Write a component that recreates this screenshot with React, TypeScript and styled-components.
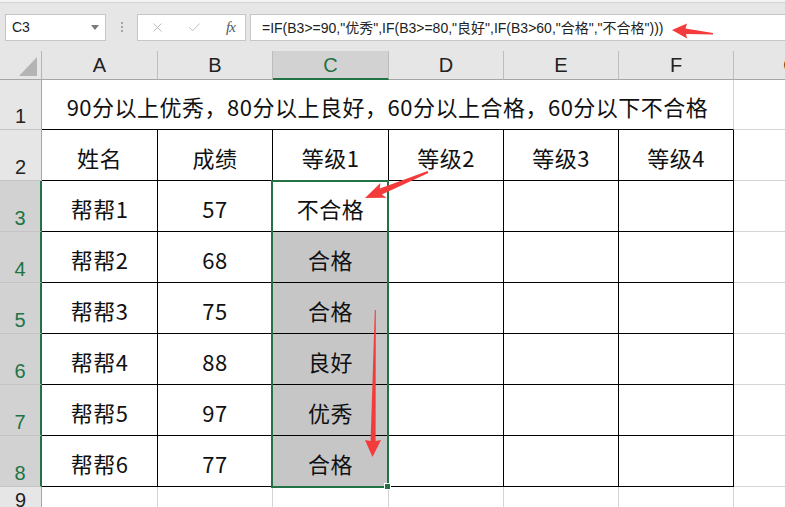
import React from 'react'
import styled, { createGlobalStyle } from 'styled-components'
import { X, Check } from 'lucide-react'

const GRID = '#d4d4d4'
const INK = '#000'
const GREEN = '#217346'

const GlobalStyle = createGlobalStyle`
  html, body {
    margin: 0;
    padding: 0;
    background: #fff;
  }
  body {
    font-family: "Noto Sans CJK SC", "Noto Sans", sans-serif;
    overflow: hidden;
  }
`

const Page = styled.div`
  position: relative;
  width: 785px;
  height: 507px;
  overflow: hidden;
  background: #fff;
`

const TopStrip = styled.div`
  height: 2px;
  background: #f3f3f3;
  border-bottom: 1px solid #d4d4d4;
`

const FormulaBar = styled.div`
  display: flex;
  align-items: center;
  height: 48px;
  padding-left: 5px;
  background: #e6e6e6;
`

const NameBox = styled.div`
  box-sizing: border-box;
  display: flex;
  align-items: center;
  justify-content: space-between;
  width: 101px;
  height: 27px;
  padding: 0 6px 0 6px;
  background: #fff;
  border: 1px solid #c6c6c6;
  font-family: "Liberation Sans", "Noto Sans", sans-serif;
  font-size: 14px;
  color: #222;
`

const Caret = styled.span`
  width: 0;
  height: 0;
  border-left: 4px solid transparent;
  border-right: 4px solid transparent;
  border-top: 5px solid #7a7a7a;
`

const Grip = styled.div`
  display: flex;
  flex-direction: column;
  gap: 2px;
  margin: 0 14px 0 15px;
  & > span {
    width: 2px;
    height: 2px;
    background: #a6a6a6;
  }
`

const ButtonBox = styled.div`
  box-sizing: border-box;
  display: flex;
  align-items: center;
  width: 109px;
  height: 27px;
  padding-left: 12px;
  gap: 22px;
  background: #fff;
  border: 1px solid #c6c6c6;
`

const Fx = styled.span`
  font-family: "Liberation Serif", "DejaVu Serif", serif;
  font-style: italic;
  font-size: 15px;
  color: #555;
  letter-spacing: -1px;
  margin-left: 2px;
`

const FormulaInput = styled.div`
  box-sizing: border-box;
  flex: 1;
  display: flex;
  align-items: center;
  height: 27px;
  margin-left: 4px;
  padding-left: 11px;
  background: #fff;
  border: 1px solid #c6c6c6;
  border-right: none;
  font-family: "Liberation Sans", "Noto Sans CJK SC", sans-serif;
  font-size: 14px;
  color: #222;
  white-space: nowrap;
`

const Sheet = styled.div`
  display: grid;
  grid-template-columns: 42px 116px 115px 116px 115px 115px 115px 115px;
  grid-template-rows: 29px 50px repeat(7, 51px) 27px;
`

const Corner = styled.div`
  box-sizing: border-box;
  background: #e6e6e6;
  border-right: 1px solid #b5b5b5;
  border-bottom: 1px solid #a6a6a6;
`

const ColHead = styled.div<{ $selected?: boolean }>`
  box-sizing: border-box;
  display: flex;
  align-items: center;
  justify-content: center;
  background: ${({ $selected }) => ($selected ? '#d2d2d2' : '#e6e6e6')};
  border-right: 1px solid #bdbdbd;
  border-bottom: ${({ $selected }) => ($selected ? `2px solid ${GREEN}` : '1px solid #a6a6a6')};
  font-family: "Liberation Sans", "Noto Sans", sans-serif;
  font-size: 20px;
  color: ${({ $selected }) => ($selected ? GREEN : '#222')};
  padding-top: ${({ $selected }) => ($selected ? '1px' : '0')};
`

const RowHead = styled.div<{ $selected?: boolean }>`
  box-sizing: border-box;
  display: flex;
  align-items: flex-end;
  justify-content: center;
  padding-bottom: 2px;
  background: ${({ $selected }) => ($selected ? '#d2d2d2' : '#e6e6e6')};
  border-right: ${({ $selected }) => ($selected ? `2px solid ${GREEN}` : '1px solid #a6a6a6')};
  border-bottom: 1px solid #c4c4c4;
  font-family: "Liberation Sans", "Noto Sans", sans-serif;
  font-size: 20px;
  line-height: 22px;
  color: ${({ $selected }) => ($selected ? GREEN : '#222')};
`

const Cell = styled.div<{ $right: string; $bottom: string; $fill?: string; $span?: number }>`
  box-sizing: border-box;
  position: relative;
  display: flex;
  align-items: center;
  justify-content: center;
  padding-top: 3px;
  grid-column: ${({ $span }) => ($span ? `span ${$span}` : 'auto')};
  background: ${({ $fill }) => $fill || '#fff'};
  border-right: 1px solid ${({ $right }) => $right};
  border-bottom: 1px solid ${({ $bottom }) => $bottom};
  font-size: 22px;
  letter-spacing: 0.5px;
  color: #111;
  white-space: nowrap;
`

// green outline of the selected range C3:C8, anchored to the active cell
const Selection = styled.div<{ $rows: number }>`
  box-sizing: border-box;
  position: absolute;
  left: -2px;
  top: -1px;
  width: 118px;
  height: ${({ $rows }) => $rows * 51 + 2}px;
  border: 2px solid ${GREEN};
  pointer-events: none;
  z-index: 2;
`

const FillHandle = styled.span`
  position: absolute;
  right: -4px;
  bottom: -4px;
  width: 5px;
  height: 5px;
  background: ${GREEN};
  border: 1px solid #fff;
`

const Arrows = styled.svg`
  position: absolute;
  left: 0;
  top: 0;
  pointer-events: none;
  z-index: 5;
`

const header = ['姓名', '成绩', '等级1', '等级2', '等级3', '等级4']
const students: [string, string, string][] = [
  ['帮帮1', '57', '不合格'],
  ['帮帮2', '68', '合格'],
  ['帮帮3', '75', '合格'],
  ['帮帮4', '88', '良好'],
  ['帮帮5', '97', '优秀'],
  ['帮帮6', '77', '合格'],
]
const columns = ['A', 'B', 'C', 'D', 'E', 'F', 'G']

// row 2..8 values for columns A..F
const rowValues = (row: number): string[] => {
  if (row === 2) return header
  if (row >= 3 && row <= 8) {
    const s = students[row - 3]
    return [s[0], s[1], s[2], '', '', '']
  }
  return ['', '', '', '', '', '']
}

const App: React.FC = () => {
  const rows = [1, 2, 3, 4, 5, 6, 7, 8, 9]

  return (
    <Page>
      <GlobalStyle />
      <TopStrip />
      <FormulaBar>
        <NameBox>
          C3
          <Caret />
        </NameBox>
        <Grip>
          <span />
          <span />
          <span />
        </Grip>
        <ButtonBox>
          <X size={15} strokeWidth={1.4} color="#b4b4b4" />
          <Check size={15} strokeWidth={1.4} color="#b4b4b4" />
          <Fx>fx</Fx>
        </ButtonBox>
        <FormulaInput>=IF(B3&gt;=90,"优秀",IF(B3&gt;=80,"良好",IF(B3&gt;60,"合格","不合格")))</FormulaInput>
      </FormulaBar>

      <Sheet>
        <Corner>
          <svg width="42" height="29" style={{ display: 'block' }}>
            <polygon points="19,25 37,25 37,6" fill="#b4b4b4" />
          </svg>
        </Corner>
        {columns.map((c) => (
          <ColHead key={c} $selected={c === 'C'}>
            {c}
          </ColHead>
        ))}

        {rows.map((r) => {
          const selected = r >= 3 && r <= 8
          const cells: React.ReactNode[] = []
          if (r === 1) {
            cells.push(
              <Cell key="merged" $span={6} $right={GRID} $bottom={INK}>
                90分以上优秀，80分以上良好，60分以上合格，60分以下不合格
              </Cell>,
            )
          } else {
            rowValues(r).forEach((v, i) => {
              const inTable = r >= 2 && r <= 8
              const active = r === 3 && i === 2
              cells.push(
                <Cell
                  key={i}
                  $right={inTable ? INK : GRID}
                  $bottom={inTable ? INK : GRID}
                  $fill={i === 2 && r >= 4 && r <= 8 ? '#c6c6c6' : undefined}
                >
                  {v}
                  {active && (
                    <Selection $rows={6}>
                      <FillHandle />
                    </Selection>
                  )}
                </Cell>,
              )
            })
          }
          cells.push(<Cell key="g" $right={GRID} $bottom={GRID} />)
          return (
            <React.Fragment key={r}>
              <RowHead $selected={selected}>{r}</RowHead>
              {cells}
            </React.Fragment>
          )
        })}
      </Sheet>

      <Arrows width="785" height="507">
        <polygon
          points="672,30 687,23.5 685.5,28.5 713,33 713,34.5 686,34 687,38.5"
          fill="#f43b3b"
        />
        <polygon
          points="365,198 380.4,183 379.8,188.5 427.6,171 428.4,173 381.8,194.5 386.6,197.8"
          fill="#f43b3b"
        />
        <polygon
          points="372.5,457 365,440 370.6,441 374.8,310 375.8,310 375.6,441 381,440"
          fill="#f43b3b"
        />
      </Arrows>
    </Page>
  )
}

export default App
